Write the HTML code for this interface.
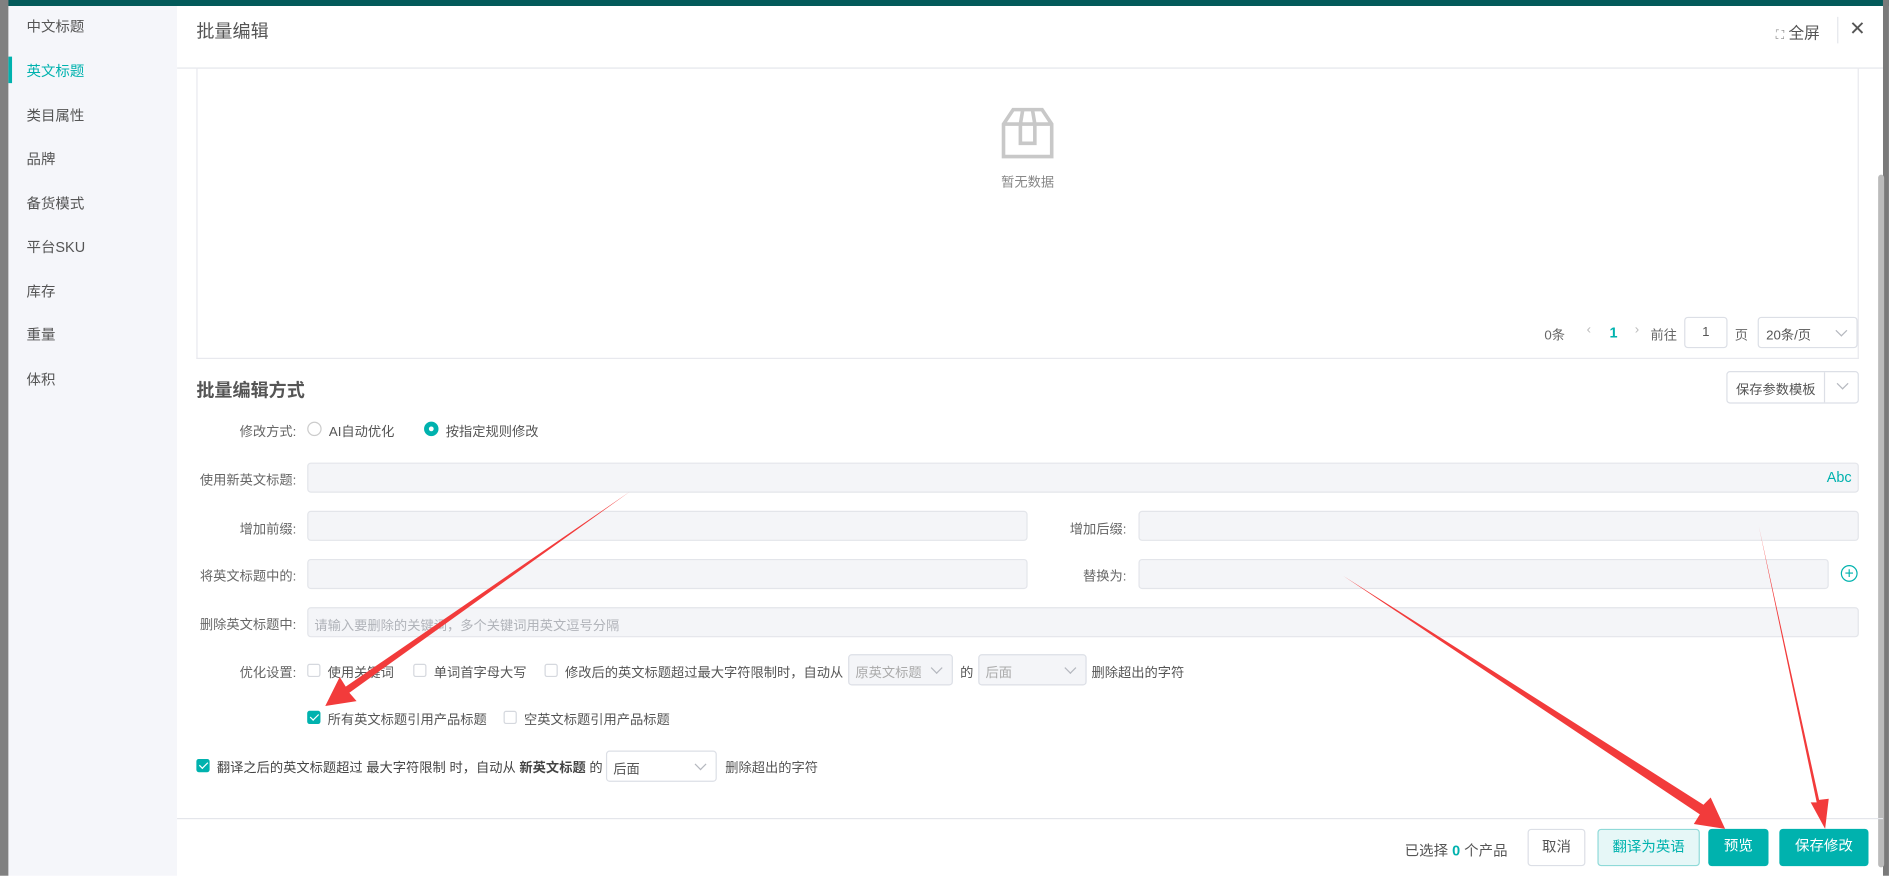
<!DOCTYPE html>
<html><head><meta charset="utf-8"><style>
*{margin:0;padding:0;box-sizing:border-box}
html,body{width:1889px;height:876px;overflow:hidden;background:#fff}
#w{position:absolute;left:0;top:0;width:1568px;height:727px;transform:scale(1.2047);transform-origin:0 0;font-family:"Liberation Sans","Noto Sans CJK SC",sans-serif;font-size:11px;color:#555;overflow:hidden}
.a{position:absolute;white-space:nowrap}
.inp{position:absolute;background:#f4f5f8;border:1px solid #e3e5ea;border-radius:3px;height:25px}
.lbl{position:absolute;text-align:right;width:120px;left:126px;color:#666}
.cb{position:absolute;width:11px;height:11px;border:1px solid #d5d8de;border-radius:2px;background:#fff}
.cb.on{background:#00b2ae;border-color:#00b2ae}
.cb.on:after{content:"";position:absolute;left:3px;top:0px;width:3px;height:6px;border:solid #fff;border-width:0 1.5px 1.5px 0;transform:rotate(45deg)}
.sel{position:absolute;border:1px solid #dcdfe6;border-radius:3px;background:#fff;height:26px}
.sel.dis{background:#f4f5f8;color:#aaa}
.chev{position:absolute;right:9px;top:7px;width:7px;height:7px;border:solid #b5b8bf;border-width:0 1px 1px 0;transform:rotate(45deg)}
.side div{position:absolute;left:15px;color:#555;font-size:12px}
.btn{position:absolute;top:688px;height:31px;border-radius:3px;text-align:center;line-height:29px;font-size:12px}
</style></head><body><div id="w">
<div class="a" style="left:0;top:0;width:1568px;height:5px;background:#035a5a"></div>
<div class="a" style="left:0;top:0;width:7px;height:727px;background:#808080"></div>
<div class="a" style="left:1563px;top:0;width:5px;height:727px;background:#7a7a7a"></div>
<div class="a side" style="left:7px;top:5px;width:140px;height:722px;background:#f5f6fa">
<div style="top:8px">中文标题</div>
<div style="top:45px;color:#00b2ae">英文标题</div>
<div style="top:82px">类目属性</div>
<div style="top:118px">品牌</div>
<div style="top:155px">备货模式</div>
<div style="top:191px">平台SKU</div>
<div style="top:228px">库存</div>
<div style="top:264px">重量</div>
<div style="top:301px">体积</div>
</div>
<div class="a" style="left:7px;top:47px;width:3px;height:22px;background:#00b2ae"></div>
<div class="a" style="left:147px;top:5px;width:1416px;height:722px;background:#fff"></div>
<div class="a" style="left:163px;top:15px;font-size:15px;color:#555">批量编辑</div>
<div class="a" style="left:147px;top:56px;width:1416px;height:1px;background:#e4e6eb"></div>
<div class="a" style="left:1474px;top:17px;font-size:13px;color:#555"><span style="font-size:10px;color:#888">⛶</span> 全屏</div>
<div class="a" style="left:1525px;top:14px;width:1px;height:22px;background:#e4e6eb"></div>
<div class="a" style="left:1535px;top:14px;font-size:16px;color:#555">✕</div>
<div class="a" style="left:1559px;top:145px;width:5px;height:575px;background:#bbb;border-radius:3px"></div>
<div class="a" style="left:163px;top:56px;width:1380px;height:242px;border:1px solid #e8e9ee;border-top:none"></div>
<svg class="a" style="left:830px;top:87px" width="46" height="46" viewBox="0 0 46 46" fill="none" stroke="#c8c8c8" stroke-width="3"><path d="M3 16 L11 4 H35 L43 16 V43 H3 Z M3 16 H43 M19 4 L17 16 V32 H29 V16 L27 4"/></svg>
<div class="a" style="left:831px;top:143px;color:#888">暂无数据</div>
<div class="a" style="left:1282px;top:270px;color:#666">0条</div>
<div class="a" style="left:1317px;top:268px;color:#bbb">‹</div>
<div class="a" style="left:1336px;top:269px;color:#00b2ae;font-weight:bold;font-size:12px">1</div>
<div class="a" style="left:1357px;top:268px;color:#bbb">›</div>
<div class="a" style="left:1370px;top:270px;color:#666">前往</div>
<div class="a" style="left:1398px;top:263px;width:36px;height:26px;border:1px solid #dcdfe6;border-radius:3px;text-align:center;line-height:24px">1</div>
<div class="a" style="left:1440px;top:270px;color:#666">页</div>
<div class="sel" style="left:1459px;top:263px;width:83px"><span class="a" style="left:6px;top:6px">20条/页</span><i class="chev"></i></div>
<div class="a" style="left:163px;top:313px;font-size:15px;font-weight:bold;color:#555">批量编辑方式</div>
<div class="a" style="left:1433px;top:308px;width:110px;height:27px;border:1px solid #dcdfe6;border-radius:3px"><span class="a" style="left:7px;top:6px">保存参数模板</span><span class="a" style="left:80px;top:0;width:1px;height:25px;background:#dcdfe6"></span><i class="chev" style="right:9px;top:6px"></i></div>
<div class="lbl" style="top:350px">修改方式:</div>
<div class="a" style="left:255px;top:350px;width:12px;height:12px;border:1px solid #ccc;border-radius:50%"></div>
<div class="a" style="left:273px;top:350px">AI自动优化</div>
<div class="a" style="left:352px;top:350px;width:12px;height:12px;border:4px solid #00b2ae;border-radius:50%;background:#fff"></div>
<div class="a" style="left:370px;top:350px">按指定规则修改</div>
<div class="lbl" style="top:390px">使用新英文标题:</div>
<div class="inp" style="left:255px;top:384px;width:1288px"><span class="a" style="right:5px;top:4px;color:#00b2ae;font-size:12px">Abc</span></div>
<div class="lbl" style="top:431px">增加前缀:</div>
<div class="inp" style="left:255px;top:424px;width:598px"></div>
<div class="lbl" style="top:431px;left:815px">增加后缀:</div>
<div class="inp" style="left:945px;top:424px;width:598px"></div>
<div class="lbl" style="top:470px">将英文标题中的:</div>
<div class="inp" style="left:255px;top:464px;width:598px"></div>
<div class="lbl" style="top:470px;left:815px">替换为:</div>
<div class="inp" style="left:945px;top:464px;width:573px"></div>
<div class="a" style="left:1528px;top:469px;width:14px;height:14px;border:1.3px solid #00b2ae;border-radius:50%;color:#00b2ae;text-align:center;line-height:11px;font-size:13px">+</div>
<div class="lbl" style="top:510px">删除英文标题中:</div>
<div class="inp" style="left:255px;top:504px;width:1288px"><span class="a" style="left:5px;top:6px;color:#b0b3b9">请输入要删除的关键词，多个关键词用英文逗号分隔</span></div>
<div class="lbl" style="top:550px">优化设置:</div>
<div class="cb" style="left:255px;top:551px"></div><div class="a" style="left:272px;top:550px">使用关键词</div>
<div class="cb" style="left:343px;top:551px"></div><div class="a" style="left:360px;top:550px">单词首字母大写</div>
<div class="cb" style="left:452px;top:551px"></div><div class="a" style="left:469px;top:550px">修改后的英文标题超过最大字符限制时，自动从</div>
<div class="sel dis" style="left:704px;top:543px;width:87px"><span class="a" style="left:5px;top:6px">原英文标题</span><i class="chev"></i></div>
<div class="a" style="left:797px;top:550px">的</div>
<div class="sel dis" style="left:812px;top:543px;width:90px"><span class="a" style="left:5px;top:6px">后面</span><i class="chev"></i></div>
<div class="a" style="left:906px;top:550px">删除超出的字符</div>
<div class="cb on" style="left:255px;top:590px"></div><div class="a" style="left:272px;top:589px">所有英文标题引用产品标题</div>
<div class="cb" style="left:418px;top:590px"></div><div class="a" style="left:435px;top:589px">空英文标题引用产品标题</div>
<div class="cb on" style="left:163px;top:630px"></div>
<div class="a" style="left:180px;top:629px;color:#444">翻译之后的英文标题超过 最大字符限制 时，自动从 <b>新英文标题</b> 的</div>
<div class="sel" style="left:503px;top:623px;width:92px;height:26px"><span class="a" style="left:5px;top:6px">后面</span><i class="chev"></i></div>
<div class="a" style="left:602px;top:629px">删除超出的字符</div>
<div class="a" style="left:147px;top:679px;width:1416px;height:1px;background:#e4e6eb"></div>
<div class="a" style="left:1166px;top:697px;color:#555;font-size:12px">已选择 <b style="color:#00b2ae">0</b> 个产品</div>
<div class="btn" style="left:1268px;width:48px;border:1px solid #dcdfe6;color:#555">取消</div>
<div class="btn" style="left:1326px;width:85px;border:1px solid #8fdad8;background:#e6f7f7;color:#00b2ae">翻译为英语</div>
<div class="btn" style="left:1418px;width:50px;background:#00b2ae;color:#fff">预览</div>
<div class="btn" style="left:1477px;width:74px;background:#00b2ae;color:#fff">保存修改</div>
<svg class="a" style="left:0;top:0" width="1568" height="727">
<g fill="#f23b3b">
<polygon points="523,408 290,575 296,582 270,586 282,562 287,570"/>
<polygon points="1115,478 1414,668 1420,662 1432,688 1406,684 1411,676"/>
<polygon points="1460,437 1510,664 1518,663 1515,688 1503,666 1508,666"/>
</g></svg>
</div></body></html>
